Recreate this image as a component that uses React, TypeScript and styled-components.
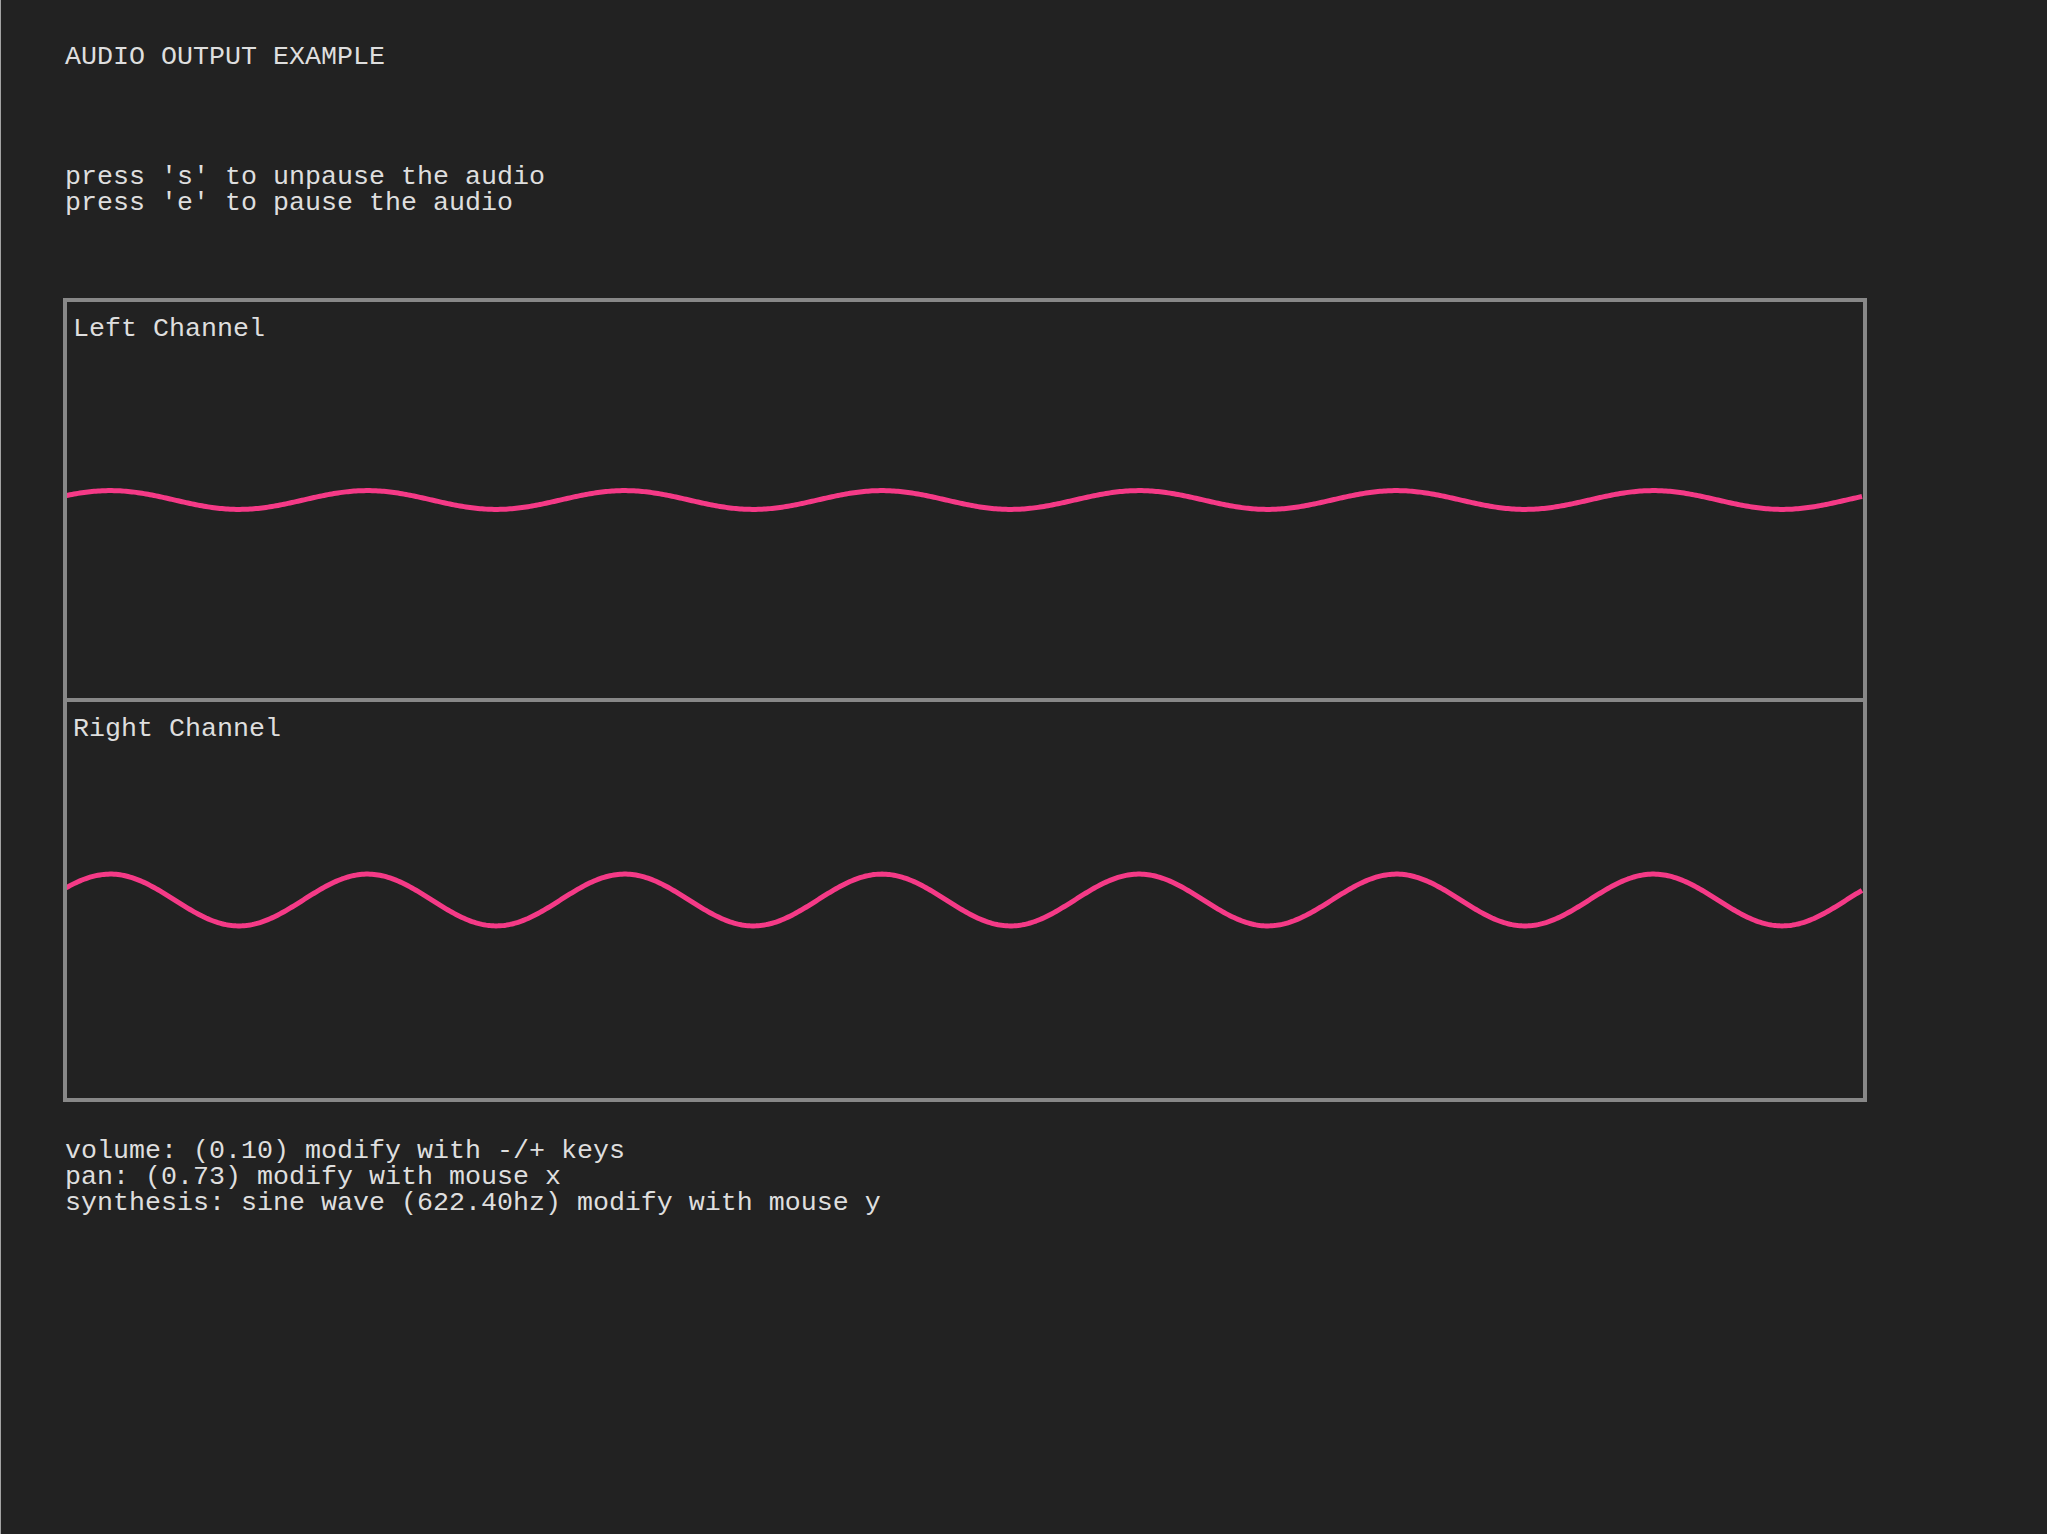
import React, { useMemo } from "react";
import styled, { createGlobalStyle } from "styled-components";

const GlobalStyle = createGlobalStyle`
  html, body {
    margin: 0;
    padding: 0;
    background: #222222;
  }
  body {
    font-family: "Liberation Mono", "DejaVu Sans Mono", monospace;
  }
`;

const Page = styled.main`
  box-sizing: border-box;
  min-height: 100vh;
  border-left: 1px solid #a3a3a3;
  padding: 44px 0 0 64px;
  color: #dedede;
  font-family: "Liberation Mono", "DejaVu Sans Mono", monospace;
  font-size: 26.66px;
  line-height: 26px;
  white-space: pre;
`;

const Title = styled.h1`
  margin: 0;
  font: inherit;
`;

const TextBlock = styled.div<{ $gap: number }>`
  margin-top: ${(p) => p.$gap}px;
`;

const Line = styled.div``;

const Scope = styled.section`
  box-sizing: border-box;
  width: 1804px;
  margin: 82px 0 0 -2px;
  border: 4px solid #888888;
  display: flex;
  flex-direction: column;
`;

const Channel = styled.div<{ $divided?: boolean }>`
  display: grid;
  height: 396px;
  border-top: ${(p) => (p.$divided ? "4px solid #888888" : "none")};
`;

const ChannelLabel = styled.div`
  grid-area: 1 / 1;
  align-self: start;
  justify-self: start;
  padding: 14px 0 0 6px;
  position: relative;
  z-index: 1;
`;

const WaveSvg = styled.svg`
  grid-area: 1 / 1;
  display: block;
  width: 1796px;
  height: 396px;
`;

const PERIOD = 257.2;
const PHASE_X = 46;

function Wave({ amp }: { amp: number }) {
  const d = useMemo(() => {
    const pts: string[] = [];
    for (let xp = 64; xp <= 1862; xp += 2) {
      const y = 198 - amp * Math.sin((2 * Math.PI * (xp - PHASE_X)) / PERIOD);
      pts.push(`${(xp - 67).toFixed(1)},${y.toFixed(2)}`);
    }
    return "M" + pts.join(" L");
  }, [amp]);
  return (
    <WaveSvg viewBox="0 0 1796 396">
      <path
        d={d}
        fill="none"
        stroke="rgb(245,58,135)"
        strokeWidth={5}
        strokeLinejoin="round"
      />
    </WaveSvg>
  );
}

export default function App() {
  return (
    <>
      <GlobalStyle />
      <Page>
        <Title>AUDIO OUTPUT EXAMPLE</Title>
        <TextBlock $gap={94}>
          <Line>press 's' to unpause the audio</Line>
          <Line>press 'e' to pause the audio</Line>
        </TextBlock>
        <Scope>
          <Channel>
            <ChannelLabel>Left Channel</ChannelLabel>
            <Wave amp={9.4} />
          </Channel>
          <Channel $divided>
            <ChannelLabel>Right Channel</ChannelLabel>
            <Wave amp={25.9} />
          </Channel>
        </Scope>
        <TextBlock $gap={36}>
          <Line>volume: (0.10) modify with -/+ keys</Line>
          <Line>pan: (0.73) modify with mouse x</Line>
          <Line>synthesis: sine wave (622.40hz) modify with mouse y</Line>
        </TextBlock>
      </Page>
    </>
  );
}
